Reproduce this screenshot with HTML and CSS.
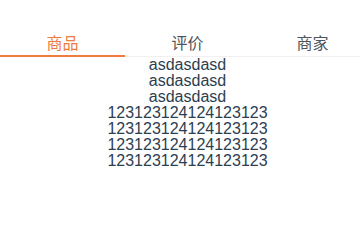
FILE: index.html
```html
<!DOCTYPE html>
<html lang="zh">
<head>
<meta charset="utf-8">
<link rel="stylesheet" href="styles.css">
</head>
<body>
<div class="app">
  <nav class="tabs">
    <a class="tab active">商品</a>
    <a class="tab">评价</a>
    <a class="tab">商家</a>
  </nav>
  <div class="content">
    <div>asdasdasd</div>
    <div>asdasdasd</div>
    <div>asdasdasd</div>
    <div>123123124124123123</div>
    <div>123123124124123123</div>
    <div>123123124124123123</div>
    <div>123123124124123123</div>
  </div>
</div>
</body>
</html>
```

FILE: styles.css
```css
html { overflow: hidden; background: #fff; }
body { margin: 0; }
.app {
  width: 375px;
  font-family: "Liberation Sans", Arial, "Noto Sans CJK SC", sans-serif;
  color: #2c3e50;
  text-align: center;
}
.tabs {
  display: flex;
  margin-top: 15px;
  border-bottom: 1px solid #f0f0f0;
}
.tab {
  flex: 1;
  height: 26px;
  padding-top: 14px;
  line-height: 26px;
  font-size: 16px;
  font-family: "Noto Sans CJK SC", sans-serif;
  color: #4d555d;
  border-bottom: 2px solid transparent;
  margin-bottom: -1px;
}
.tab.active {
  color: #f07b3f;
  border-bottom-color: #f07b3f;
}
.content {
  font-size: 16px;
  line-height: 16px;
}
```
